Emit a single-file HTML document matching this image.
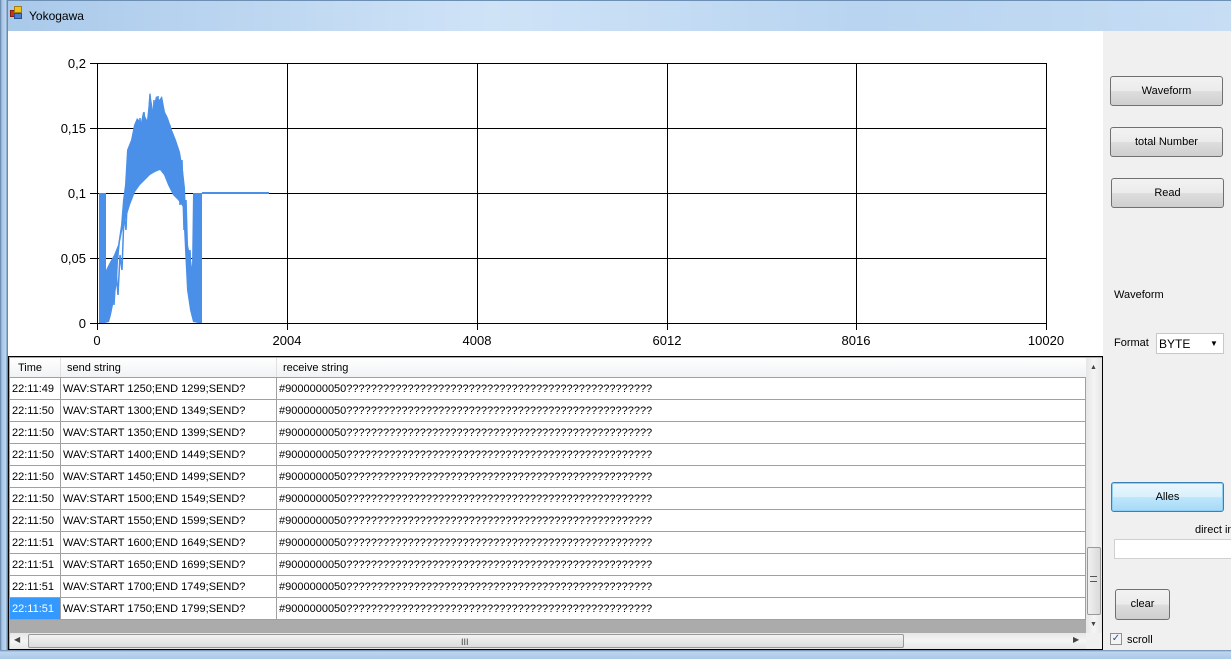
<!DOCTYPE html>
<html><head><meta charset="utf-8"><style>
*{margin:0;padding:0;box-sizing:border-box}
body{width:1231px;height:659px;overflow:hidden;position:relative;background:#f0f0f0;font-family:"Liberation Sans",sans-serif;font-size:11px;color:#000}
.abs{position:absolute;white-space:nowrap}
.title{left:0;top:0;width:1231px;height:31px;background:linear-gradient(90deg,#a9c9ea 0%,#cfe3f7 40%,#b8d4f0 70%,#c6ddf4 100%);border-top:1px solid #6d8fb3}
.lframe{left:0;top:0;width:8px;height:659px;background:linear-gradient(90deg,#5f7fa3 0,#a8c6e6 2px,#bcd6f0 6px,#6a89ab 7px)}
.bframe{left:0;top:650px;width:1231px;height:9px;background:linear-gradient(180deg,#6a89ab 0,#bcd6f0 2px,#a9c9ea 100%)}
.btn{position:absolute;width:113px;height:30px;border:1px solid #707070;border-radius:3px;background:linear-gradient(#f2f2f2 0,#ebebeb 50%,#dddddd 51%,#cfcfcf 100%);text-align:center;line-height:28px;font-size:11px}
table{border-collapse:collapse;table-layout:fixed}
td{height:22px;border:1px solid #a0a0a0;padding:0 2px;white-space:nowrap;font-size:11px;overflow:hidden}
</style></head><body>
<div class="abs title"></div>
<div class="abs lframe"></div>
<div class="abs" style="left:10px;top:10px;width:6px;height:7px;background:#d03020;border:1px solid #802010"></div>
<div class="abs" style="left:14px;top:6px;width:8px;height:7px;background:#f0c020;border:1px solid #a08010"></div>
<div class="abs" style="left:14px;top:13px;width:8px;height:6px;background:#4a7fd0;border:1px solid #2a4f90"></div>
<div class="abs" style="left:29px;top:9px;font-size:12px">Yokogawa</div>
<div class="abs" style="left:8px;top:31px;width:1095px;height:325px;background:#fff"></div>
<svg class="abs" style="left:0;top:0" width="1103" height="356">
<g stroke="#000" stroke-width="1" fill="none">
<line x1="90" y1="63.5" x2="1046" y2="63.5"/><line x1="90" y1="128.5" x2="1046" y2="128.5"/><line x1="90" y1="193.5" x2="1046" y2="193.5"/><line x1="90" y1="258.5" x2="1046" y2="258.5"/><line x1="90" y1="323.5" x2="1046" y2="323.5"/>
<line x1="97.5" y1="63" x2="97.5" y2="330"/><line x1="287.5" y1="63" x2="287.5" y2="330"/><line x1="477.5" y1="63" x2="477.5" y2="330"/><line x1="667.5" y1="63" x2="667.5" y2="330"/><line x1="856.5" y1="63" x2="856.5" y2="330"/><line x1="1046.5" y1="63" x2="1046.5" y2="330"/>
</g>
<g font-family="Liberation Sans" font-size="13" fill="#000" text-anchor="end">
<text x="86" y="68">0,2</text><text x="86" y="133">0,15</text><text x="86" y="198">0,1</text><text x="86" y="263">0,05</text><text x="86" y="328">0</text>
</g>
<g font-family="Liberation Sans" font-size="13" fill="#000" text-anchor="middle">
<text x="97" y="345">0</text><text x="287" y="345">2004</text><text x="477" y="345">4008</text><text x="667" y="345">6012</text><text x="856" y="345">8016</text><text x="1046" y="345">10020</text>
</g>
<polygon fill="#4a8fe8" points="99,193 106,193 106,270 110,262 114,255 118,245 121,225 123,200 125,185 127,150 131,140 134,125 137,118 141,122 143,112 147,120 150,92 153,110 156,96 159,100 162,96 165,112 168,118 172,130 176,140 180,152 183,170 185,188 187,240 190,255 192,267 193,193 202,193 202,323 198,323 193,322 190,310 187,290 185,250 183,207 178,200 173,195 168,185 164,175 160,170 155,172 150,175 145,180 140,185 135,192 130,205 126,218 122,232 120,242 118,262 117,282 114,300 111,315 109,322 105,323 99,323"/>
<polyline fill="none" stroke="#4a8fe8" stroke-width="1.5" points="106,300 108,280 110,310 112,275 114,305 116,270 118,295 120,255 122,270 124,215 126,230 128,180 130,200 132,140 134,175 136,130 138,160 140,118 142,150 144,112 146,140 148,125 150,94 152,150 154,100 156,140 158,96 160,140 162,100 164,150 166,115 168,160 170,125 172,175 174,140 176,190 178,150 180,205 182,160 184,230 186,200 188,270 190,250 192,300 194,320"/>
<line x1="202" y1="193" x2="269" y2="193" stroke="#4a8fe8" stroke-width="2"/>
</svg>
<div class="abs" style="left:8px;top:356px;width:1095px;height:294px;border:1px solid #000;background:#ababab;overflow:hidden">
<div class="abs" style="left:1px;top:1px;width:1076px;height:20px;background:linear-gradient(#fff,#f0f2f5);border-bottom:1px solid #d5d5d5"></div>
<div class="abs" style="left:9px;top:5px">Time</div>
<div class="abs" style="left:51px;top:1px;width:1px;height:20px;background:#e0e0e0"></div>
<div class="abs" style="left:58px;top:5px">send string</div>
<div class="abs" style="left:267px;top:1px;width:1px;height:20px;background:#e0e0e0"></div>
<div class="abs" style="left:274px;top:5px">receive string</div>
<table class="abs" style="left:0px;top:20px;background:#fff;width:1076px">
<colgroup><col style="width:51px"><col style="width:216px"><col style="width:809px"></colgroup>
<tr><td>22:11:49</td><td>WAV:START 1250;END 1299;SEND?</td><td>#9000000050??????????????????????????????????????????????????</td></tr>
<tr><td>22:11:50</td><td>WAV:START 1300;END 1349;SEND?</td><td>#9000000050??????????????????????????????????????????????????</td></tr>
<tr><td>22:11:50</td><td>WAV:START 1350;END 1399;SEND?</td><td>#9000000050??????????????????????????????????????????????????</td></tr>
<tr><td>22:11:50</td><td>WAV:START 1400;END 1449;SEND?</td><td>#9000000050??????????????????????????????????????????????????</td></tr>
<tr><td>22:11:50</td><td>WAV:START 1450;END 1499;SEND?</td><td>#9000000050??????????????????????????????????????????????????</td></tr>
<tr><td>22:11:50</td><td>WAV:START 1500;END 1549;SEND?</td><td>#9000000050??????????????????????????????????????????????????</td></tr>
<tr><td>22:11:50</td><td>WAV:START 1550;END 1599;SEND?</td><td>#9000000050??????????????????????????????????????????????????</td></tr>
<tr><td>22:11:51</td><td>WAV:START 1600;END 1649;SEND?</td><td>#9000000050??????????????????????????????????????????????????</td></tr>
<tr><td>22:11:51</td><td>WAV:START 1650;END 1699;SEND?</td><td>#9000000050??????????????????????????????????????????????????</td></tr>
<tr><td>22:11:51</td><td>WAV:START 1700;END 1749;SEND?</td><td>#9000000050??????????????????????????????????????????????????</td></tr>
<tr><td style="background:#3399ff;color:#fff">22:11:51</td><td>WAV:START 1750;END 1799;SEND?</td><td>#9000000050??????????????????????????????????????????????????</td></tr>
</table>
<div class="abs" style="left:1077px;top:1px;width:16px;height:275px;background:linear-gradient(90deg,#e6e6e6,#f5f5f5,#e6e6e6)"></div>
<div class="abs" style="left:1081px;top:7px;font-size:7px;color:#444">▲</div>
<div class="abs" style="left:1078px;top:190px;width:14px;height:68px;border:1px solid #999;border-radius:2px;background:linear-gradient(90deg,#f0f0f0,#dadada)"></div>
<div class="abs" style="left:1081px;top:219px;width:7px;height:6px;border-top:1px solid #555;border-bottom:1px solid #555"></div>
<div class="abs" style="left:1081px;top:264px;font-size:7px;color:#444">▼</div>
<div class="abs" style="left:1px;top:276px;width:1076px;height:16px;background:linear-gradient(#e6e6e6,#f5f5f5,#e6e6e6)"></div>
<div class="abs" style="left:5px;top:278px;font-size:8px;color:#444">◀</div>
<div class="abs" style="left:19px;top:277px;width:876px;height:14px;border:1px solid #999;border-radius:2px;background:linear-gradient(#f3f3f3,#dcdcdc)"></div>
<div class="abs" style="left:452px;top:280px;font-size:9px;color:#444">III</div>
<div class="abs" style="left:1064px;top:278px;font-size:8px;color:#444">▶</div>
<div class="abs" style="left:1077px;top:276px;width:16px;height:16px;background:#f0f0f0"></div>
</div>
<div class="btn" style="left:1110px;top:76px">Waveform</div>
<div class="btn" style="left:1110px;top:127px">total Number</div>
<div class="btn" style="left:1111px;top:178px">Read</div>
<div class="abs" style="left:1114px;top:289px">Waveform</div>
<div class="abs" style="left:1114px;top:337px">Format</div>
<div class="abs" style="left:1156px;top:333px;width:68px;height:21px;background:#fff;border:1px solid #c8c8c8"></div>
<div class="abs" style="left:1159px;top:337px;font-size:12px">BYTE</div>
<div class="abs" style="left:1210px;top:339px;font-size:8px">▼</div>
<div class="btn" style="left:1111px;top:482px;width:113px;height:30px;border-color:#3c7fb1;box-shadow:inset 0 0 0 1px #8ed0f5;background:linear-gradient(#eaf6fd 0,#d9f0fc 50%,#bee6fd 51%,#a7d9f5 100%)">Alles</div>
<div class="abs" style="left:1195px;top:524px">direct in</div>
<div class="abs" style="left:1114px;top:539px;width:120px;height:20px;background:#fff;border:1px solid #d0d0d0"></div>
<div class="btn" style="left:1115px;top:589px;width:55px;height:31px">clear</div>
<div class="abs" style="left:1110px;top:633px;width:12px;height:12px;border:1px solid #8f8f8f;background:#f4f4f4;color:#2a4f90;font-size:10px;line-height:10px;text-align:center">✓</div>
<div class="abs" style="left:1127px;top:634px">scroll</div>
<div class="abs bframe"></div>
</body></html>
